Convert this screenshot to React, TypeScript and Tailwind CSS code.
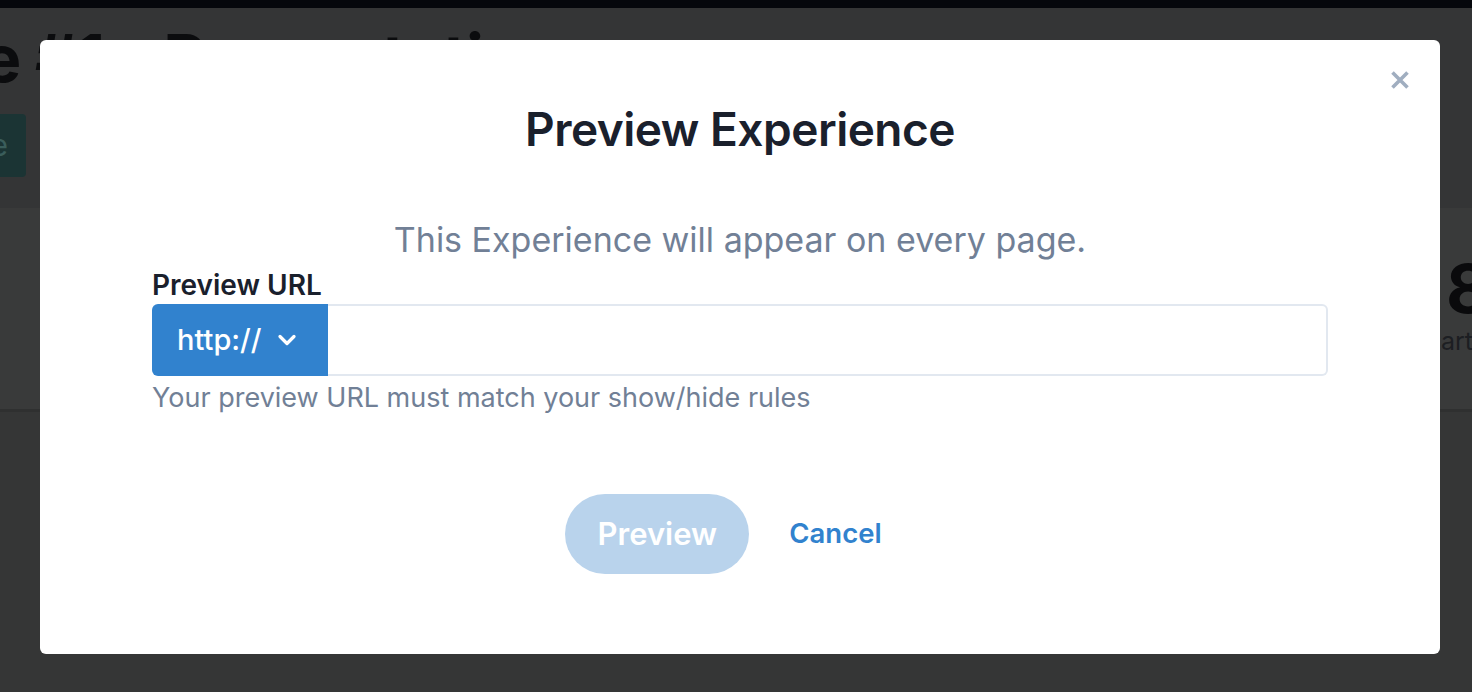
import React from 'react';
import { ChevronDown } from 'lucide-react';

const font = { fontFamily: 'Inter, "Noto Sans", sans-serif' };

const CloseIcon = () => (
  <svg viewBox="0 0 20 20" className="w-[20px] h-[20px]" fill="none" stroke="currentColor" strokeWidth={3.6} aria-hidden="true">
    <path d="M2.5 2.5 L17.5 17.5 M17.5 2.5 L2.5 17.5" />
  </svg>
);

// Page that sits behind the dimmed overlay
const BackgroundPage = () => (
  <div className="flex flex-col h-full">
    <div className="h-[8px] bg-[#05070c]" />
    <div className="h-[200px] bg-[#343536] flex flex-col">
      <div className="mt-[12px] -ml-[18px] text-[66px] leading-[76px] font-bold text-[#0b0c0e] whitespace-nowrap tracking-[-1px]">
        e #1 - Presentation
      </div>
      <div className="mt-[18px] -ml-[40px] w-[66px] h-[63px] rounded-[4px] bg-[#1b3434] flex items-center justify-end pr-[18px] text-[30px] text-[#3a5d5b]">
        e
      </div>
    </div>
    <div className="h-[204px] bg-[#393a3a] border-b-[3px] border-[#2f3030] flex justify-end">
      <div className="flex flex-col items-start w-[32px] overflow-hidden pt-[44px]">
        <div className="ml-[6px] text-[68px] leading-[72px] font-bold text-[#0a0a0c]">8</div>
        <div className="ml-[1px] text-[25px] leading-[34px] text-[#1c1e22] whitespace-nowrap">art</div>
      </div>
    </div>
    <div className="flex-1 bg-[#353636]" />
  </div>
);

const PreviewModal = () => (
  <div className="w-[1400px] h-[614px] bg-white rounded-[6px] relative flex flex-col items-center pt-[60px] px-[112px]">
    <button className="absolute top-[21px] right-[21px] w-[38px] h-[38px] flex items-center justify-center text-[#a0aec0]">
      <CloseIcon />
    </button>
    <h2 className="text-[46px] leading-[58px] font-semibold text-[#1a202c] tracking-[-0.5px]">Preview Experience</h2>
    <p className="mt-[58px] text-[34px] leading-[48px] text-[#718096]">This Experience will appear on every page.</p>
    <div className="w-full flex flex-col mt-[3px]">
      <label className="text-[28px] leading-[36px] font-semibold text-[#1a202c]">Preview URL</label>
      <div className="mt-[1px] flex h-[72px] w-full">
        <button className="w-[176px] h-full bg-[#3182ce] rounded-l-[6px] flex items-center pl-[25px] gap-[11px] text-white">
          <span className="text-[29px] font-medium">http://</span>
          <ChevronDown size={28} strokeWidth={2.8} />
        </button>
        <div className="flex-1 h-full border-2 border-l-0 border-[#e2e8f0] rounded-r-[6px]" />
      </div>
      <p className="mt-[2px] text-[27px] leading-[39px] text-[#718096]">Your preview URL must match your show/hide rules</p>
    </div>
    <div className="mt-[77px] flex items-center gap-[12px]">
      <button disabled className="w-[184px] h-[80px] rounded-full bg-[#b9d3ec] text-white text-[31px] font-semibold">
        Preview
      </button>
      <button className="h-[80px] pl-[28px] pr-[33px] text-[27.5px] font-semibold text-[#3182ce]">Cancel</button>
    </div>
  </div>
);

export default function App() {
  return (
    <div className="relative w-full h-[692px] overflow-hidden bg-[#353636]" style={font}>
      <BackgroundPage />
      <div className="absolute inset-0 p-[40px]">
        <PreviewModal />
      </div>
    </div>
  );
}
